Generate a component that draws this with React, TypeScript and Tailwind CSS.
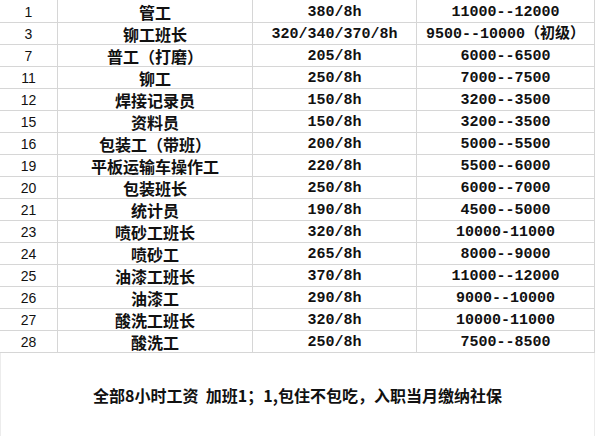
const rows = [
  ['1', '管工', '380/8h', '11000--12000'],
  ['3', '铆工班长', '320/340/370/8h', '9500--10000（初级）'],
  ['7', '普工（打磨）', '205/8h', '6000--6500'],
  ['11', '铆工', '250/8h', '7000--7500'],
  ['12', '焊接记录员', '150/8h', '3200--3500'],
  ['15', '资料员', '150/8h', '3200--3500'],
  ['16', '包装工（带班）', '200/8h', '5000--5500'],
  ['19', '平板运输车操作工', '220/8h', '5500--6000'],
  ['20', '包装班长', '250/8h', '6000--7000'],
  ['21', '统计员', '190/8h', '4500--5000'],
  ['23', '喷砂工班长', '320/8h', '10000-11000'],
  ['24', '喷砂工', '265/8h', '8000--9000'],
  ['25', '油漆工班长', '370/8h', '11000--12000'],
  ['26', '油漆工', '290/8h', '9000--10000'],
  ['27', '酸洗工班长', '320/8h', '10000-11000'],
  ['28', '酸洗工', '250/8h', '7500--8500'],
];

export default function App() {
  return (
    <div className="w-[596px] h-[436px] bg-white text-[#111] overflow-hidden">
      <div className="w-[595px]">
        {rows.map((r, i) => (
          <div
            key={r[0]}
            className={`flex border-b border-[#d6d6d6] ${i === 0 ? 'h-[23px]' : 'h-[22px]'}`}
          >
            <div className="w-[58px] shrink-0 border-r border-[#d6d6d6] flex items-center justify-center pt-[2px] text-[14px] font-['Liberation_Sans',sans-serif]">
              {r[0]}
            </div>
            <div className="w-[195px] shrink-0 border-r border-[#d6d6d6] flex items-center justify-center pt-[1px] text-[16px] font-bold font-['Noto_Sans_CJK_SC',sans-serif] leading-none">
              {r[1]}
            </div>
            <div className="w-[164px] shrink-0 border-r border-[#d6d6d6] flex items-center justify-center pt-[2px] text-[15px] font-bold font-['Liberation_Mono','Noto_Sans_CJK_SC',monospace] leading-none">
              {r[2]}
            </div>
            <div className="w-[178px] shrink-0 border-r border-[#d6d6d6] flex items-center justify-center pt-[2px] text-[15px] font-bold font-['Liberation_Mono','Noto_Sans_CJK_SC',monospace] leading-none">
              {r[3]}
            </div>
          </div>
        ))}
      </div>
      <div className="w-[595px] h-[84px] border-l border-r border-[#ececec] flex items-center justify-center pb-[1px]">
        <span className="text-[16px] font-bold font-['Noto_Sans_CJK_SC',sans-serif] leading-none whitespace-pre">
          全部8小时工资  加班1；1,包住不包吃，入职当月缴纳社保
        </span>
      </div>
    </div>
  );
}
